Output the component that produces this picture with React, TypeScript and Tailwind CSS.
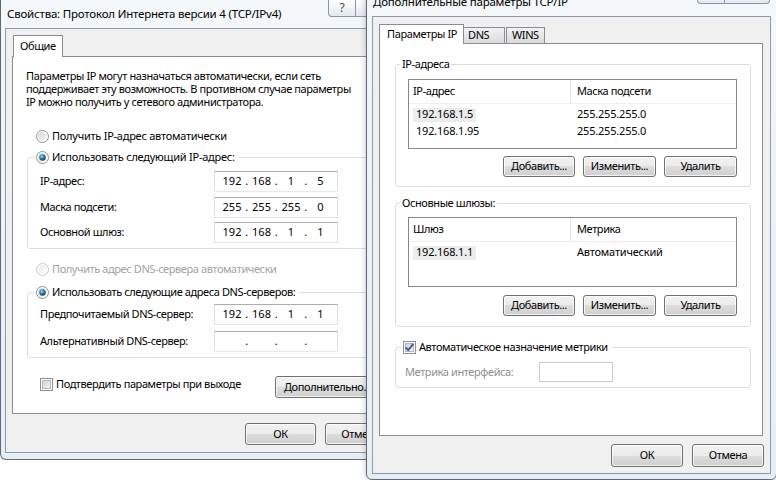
import React from "react";

const F = "font-['Noto_Sans',sans-serif] tracking-[-0.4px]";

function Btn({ children, className = "" }: { children: React.ReactNode; className?: string }) {
  return (
    <div
      className={
        "flex items-center justify-center rounded-[3px] border border-[#707070] bg-[linear-gradient(to_bottom,#f2f2f2_0%,#ebebeb_50%,#dddddd_50%,#cfcfcf_100%)] shadow-[inset_0_0_0_1px_rgba(255,255,255,0.75)] text-[11px] text-black shrink-0 " +
        className
      }
    >
      {children}
    </div>
  );
}

function Radio({ checked = false, disabled = false }: { checked?: boolean; disabled?: boolean }) {
  return (
    <svg width="13" height="13" viewBox="0 0 13 13" className="shrink-0">
      <defs>
        <linearGradient id="rfill" x1="0" y1="0" x2="1" y2="1">
          <stop offset="0" stopColor="#d2d4d6" />
          <stop offset="1" stopColor="#fbfbfb" />
        </linearGradient>
        <linearGradient id="rfilld" x1="0" y1="0" x2="1" y2="1">
          <stop offset="0" stopColor="#ebebeb" />
          <stop offset="1" stopColor="#fcfcfc" />
        </linearGradient>
        <radialGradient id="rdot" cx="0.4" cy="0.35" r="0.7">
          <stop offset="0" stopColor="#a9e4f8" />
          <stop offset="0.45" stopColor="#2b82b0" />
          <stop offset="1" stopColor="#0e3a57" />
        </radialGradient>
      </defs>
      <circle cx="6.5" cy="6.5" r="6" fill="#fff" stroke={disabled ? "#c9c9c9" : "#8e8f8f"} />
      <circle cx="6.5" cy="6.5" r="4.5" fill={disabled ? "url(#rfilld)" : "url(#rfill)"} />
      {checked && <circle cx="6.5" cy="6.5" r="3.2" fill="url(#rdot)" />}
    </svg>
  );
}

function Check({ checked = false }: { checked?: boolean }) {
  return (
    <svg width="13" height="13" viewBox="0 0 13 13" className="shrink-0">
      <defs>
        <linearGradient id="cfill" x1="0" y1="0" x2="1" y2="1">
          <stop offset="0" stopColor="#cbcfd5" />
          <stop offset="1" stopColor="#f6f6f6" />
        </linearGradient>
      </defs>
      <rect x="0.5" y="0.5" width="12" height="12" fill="#fff" stroke="#8e8f8f" />
      <rect x="2.5" y="2.5" width="8" height="8" fill="url(#cfill)" stroke="#b3b8be" />
      {checked && (
        <path d="M2.6 6.4 L5.2 9.2 L10.4 2.8" fill="none" stroke="#3d5b9a" strokeWidth="1.9" strokeLinejoin="round" />
      )}
    </svg>
  );
}

function IpField({ parts }: { parts: string[] }) {
  return (
    <div className="flex items-center h-[21px] w-[124px] border border-[#abadb3] border-x-[#dbdfe6] border-b-[#e3e9ef] bg-white pl-[6px] text-[11px] tracking-normal shrink-0">
      {parts.map((p, i) => (
        <React.Fragment key={i}>
          {i > 0 && <span className="w-[7.5px] text-center">.</span>}
          <span className="w-[22px] text-center">{p}</span>
        </React.Fragment>
      ))}
    </div>
  );
}

function Caption({ className = "" }: { className?: string }) {
  return (
    <div className={"absolute top-0 flex tracking-normal " + className}>
      <div className="w-[28px] h-[17px] rounded-bl-[4px] border border-t-0 border-[#8b95a1] bg-[linear-gradient(to_bottom,#fdfdfd,#e4e9ee)] flex items-center justify-center text-[12px] text-[#4a4a4a] leading-none">
        ?
      </div>
      <div className="w-[45px] h-[17px] rounded-br-[4px] border border-t-0 border-l-0 border-[#8b95a1] bg-[linear-gradient(to_bottom,#fdfdfd,#e4e9ee)] flex items-center justify-center text-[11px] text-[#4a4a4a] leading-none">
        ✕
      </div>
    </div>
  );
}

function LeftWindow() {
  return (
    <div className="absolute left-0 top-0 w-[406px] h-[460px] rounded-b-[6px] border-x border-b border-[#5d6874] bg-[linear-gradient(to_bottom,#f4f7fa,#e6edf5)] flex flex-col">
      <div className="relative h-[28px] shrink-0 flex items-center pl-[6px] text-[11.5px] tracking-[-0.2px]">
        Свойства: Протокол Интернета версии 4 (TCP/IPv4)
        <Caption className="left-[327px]" />
      </div>
      <div className="mx-[4px] h-[425px] border border-[#8e9aa8] bg-[#f0f0f0] flex flex-col pt-[6px]">
        <div className="h-[21px] flex items-start pl-[7px]">
          <div className="relative z-10 h-[22px] w-[50px] border border-b-0 border-[#898c95] bg-white flex items-center pl-[6px] text-[11px]">
            Общие
          </div>
        </div>
        <div className="h-[358px] mx-[6px] border border-[#898c95] bg-white flex flex-col text-[11px]">
          <p className="mt-[12px] ml-[13px] leading-[13px]">
            Параметры IP могут назначаться автоматически, если сеть
            <br />
            поддерживает эту возможность. В противном случае параметры
            <br />
            IP можно получить у сетевого администратора.
          </p>
          <div className="mt-[21px] ml-[23px] h-[15px] flex items-center gap-[3px] tracking-[-0.25px]">
            <Radio />
            Получить IP-адрес автоматически
          </div>
          <div className="relative mt-[13px] ml-[14px] mr-[13px] rounded-[3px] border border-[#d5dfe5] pt-[13px] pb-[5px] pl-[12px] flex flex-col gap-[4.5px]">
            <div className="absolute left-[7px] top-[-8px] h-[15px] bg-white px-[1px] pr-[4px] flex items-center gap-[3px] tracking-[-0.25px]">
              <Radio checked />
              Использовать следующий IP-адрес:
            </div>
            <div className="flex items-center h-[21px]">
              <span className="w-[174px]">IP-адрес:</span>
              <IpField parts={["192", "168", "1", "5"]} />
            </div>
            <div className="flex items-center h-[21px]">
              <span className="w-[174px]">Маска подсети:</span>
              <IpField parts={["255", "255", "255", "0"]} />
            </div>
            <div className="flex items-center h-[21px]">
              <span className="w-[174px]">Основной шлюз:</span>
              <IpField parts={["192", "168", "1", "1"]} />
            </div>
          </div>
          <div className="mt-[13px] ml-[23px] h-[15px] flex items-center gap-[3px] text-[#a2a2a2]">
            <Radio disabled />
            Получить адрес DNS-сервера автоматически
          </div>
          <div className="relative mt-[15px] ml-[14px] mr-[13px] rounded-[3px] border border-[#d5dfe5] pt-[11px] pb-[5px] pl-[12px] flex flex-col gap-[6px]">
            <div className="absolute left-[7px] top-[-8px] h-[15px] bg-white px-[1px] pr-[4px] flex items-center gap-[3px]">
              <Radio checked />
              Использовать следующие адреса DNS-серверов:
            </div>
            <div className="flex items-center h-[21px]">
              <span className="w-[174px]">Предпочитаемый DNS-сервер:</span>
              <IpField parts={["192", "168", "1", "1"]} />
            </div>
            <div className="flex items-center h-[21px]">
              <span className="w-[174px]">Альтернативный DNS-сервер:</span>
              <IpField parts={["", "", "", ""]} />
            </div>
          </div>
          <div className="mt-[18px] flex items-start h-[22px]">
            <div className="ml-[27px] mt-[2px] flex items-center gap-[3px] h-[13px]">
              <Check />
              Подтвердить параметры при выходе
            </div>
            <Btn className="ml-auto mr-[13px] w-[105px] h-[22px] justify-start pl-[8px]">Дополнительно...</Btn>
          </div>
        </div>
        <div className="mt-[9px] flex justify-end gap-[9px] pr-[4px]">
          <Btn className="w-[71px] h-[22px]">ОК</Btn>
          <Btn className="w-[71px] h-[22px]">Отмена</Btn>
        </div>
      </div>
    </div>
  );
}

function ListBox({
  cols,
  rows,
}: {
  cols: [string, string];
  rows: [string, string][];
}) {
  return (
    <div className="h-[70px] border border-[#828790] bg-white flex flex-col text-[11px]">
      <div className="h-[24px] flex border-b border-[#eeeeee] shrink-0">
        <div className="w-[162px] pl-[4px] border-r border-[#e5e5e5] flex items-center">{cols[0]}</div>
        <div className="pl-[6px] flex items-center">{cols[1]}</div>
      </div>
      <div className="mt-[2px] flex flex-col tracking-[-0.2px]">
        {rows.map((r, i) => (
          <div key={i} className="h-[17px] flex items-center">
            <div className="w-[162px] pl-[4px] flex items-center">
              <span className={"h-[14px] px-[3px] flex items-center " + (i === 0 ? "bg-[#ececec]" : "")}>{r[0]}</span>
            </div>
            <div className="pl-[6px]">{r[1]}</div>
          </div>
        ))}
      </div>
    </div>
  );
}

function ButtonsRow({ className = "" }: { className?: string }) {
  return (
    <div className={"flex justify-end gap-[8px] " + className}>
      <Btn className="w-[72px] h-[21px]">Добавить...</Btn>
      <Btn className="w-[73px] h-[21px]">Изменить...</Btn>
      <Btn className="w-[73px] h-[21px]">Удалить</Btn>
    </div>
  );
}

function RightWindow() {
  return (
    <div className="absolute left-[366px] top-[-14px] w-[411px] h-[494px] rounded-[6px] border border-[#5d6874] bg-[linear-gradient(to_bottom,#f4f7fa,#e6edf5)] flex flex-col shadow-[0_0_6px_rgba(0,0,0,0.25)]">
      <div className="relative h-[29px] shrink-0 flex items-center pl-[6px] text-[11.5px] tracking-[-0.2px]">
        Дополнительные параметры TCP/IP
        <Caption className="left-[330px]" />
      </div>
      <div className="mx-[5px] h-[458px] border border-[#8e9aa8] bg-[#f0f0f0] flex flex-col pt-[7px]">
        <div className="h-[19px] flex items-end pl-[6px] text-[11px] shrink-0">
          <div className="relative z-10 mb-[-1px] h-[20px] w-[85px] border border-b-0 border-[#898c95] bg-white flex items-center pl-[7px]">
            Параметры IP
          </div>
          <div className="h-[16px] w-[41px] border border-l-0 border-b-0 border-[#898c95] bg-[linear-gradient(to_bottom,#f2f2f2,#dbdbdb)] flex items-center pl-[4px]">
            DNS
          </div>
          <div className="ml-[1px] h-[16px] w-[39px] border border-b-0 border-[#898c95] bg-[linear-gradient(to_bottom,#f2f2f2,#dbdbdb)] flex items-center pl-[5px]">
            WINS
          </div>
        </div>
        <div className="h-[393px] ml-[6px] mr-[7px] border border-[#898c95] bg-white flex flex-col text-[11px] shrink-0">
          <div className="relative mt-[20px] ml-[15px] mr-[11px] rounded-[3px] border border-[#d5dfe5] pt-[14px] pb-[9px] pl-[12px] pr-[13px] flex flex-col">
            <div className="absolute left-[4px] top-[-8px] h-[15px] bg-white px-[2px] flex items-center">IP-адреса</div>
            <ListBox
              cols={["IP-адрес", "Маска подсети"]}
              rows={[
                ["192.168.1.5", "255.255.255.0"],
                ["192.168.1.95", "255.255.255.0"],
              ]}
            />
            <ButtonsRow className="mt-[7px]" />
          </div>
          <div className="relative mt-[16px] ml-[15px] mr-[11px] rounded-[3px] border border-[#d5dfe5] pt-[13px] pb-[10px] pl-[12px] pr-[13px] flex flex-col">
            <div className="absolute left-[4px] top-[-8px] h-[15px] bg-white px-[2px] flex items-center">Основные шлюзы:</div>
            <ListBox cols={["Шлюз", "Метрика"]} rows={[["192.168.1.1", "Автоматический"]]} />
            <ButtonsRow className="mt-[8px]" />
          </div>
          <div className="relative mt-[20px] ml-[15px] mr-[11px] rounded-[3px] border border-[#d5dfe5] pt-[14px] pb-[5px] pl-[9px] flex items-center">
            <div className="absolute left-[5px] top-[-8px] h-[15px] bg-white px-[2px] pr-[4px] flex items-center gap-[3px]">
              <Check checked />
              Автоматическое назначение метрики
            </div>
            <span className="w-[134px] text-[#8f8f8f]">Метрика интерфейса:</span>
            <div className="h-[20px] w-[74px] border border-[#c9ccd1] bg-white" />
          </div>
        </div>
        <div className="mt-[8px] flex justify-end gap-[9px] pr-[6px]">
          <Btn className="w-[72px] h-[23px]">ОК</Btn>
          <Btn className="w-[72px] h-[23px]">Отмена</Btn>
        </div>
      </div>
    </div>
  );
}

export default function App() {
  return (
    <div className={"relative w-[776px] h-[480px] overflow-hidden bg-white text-black " + F}>
      <LeftWindow />
      <RightWindow />
    </div>
  );
}
